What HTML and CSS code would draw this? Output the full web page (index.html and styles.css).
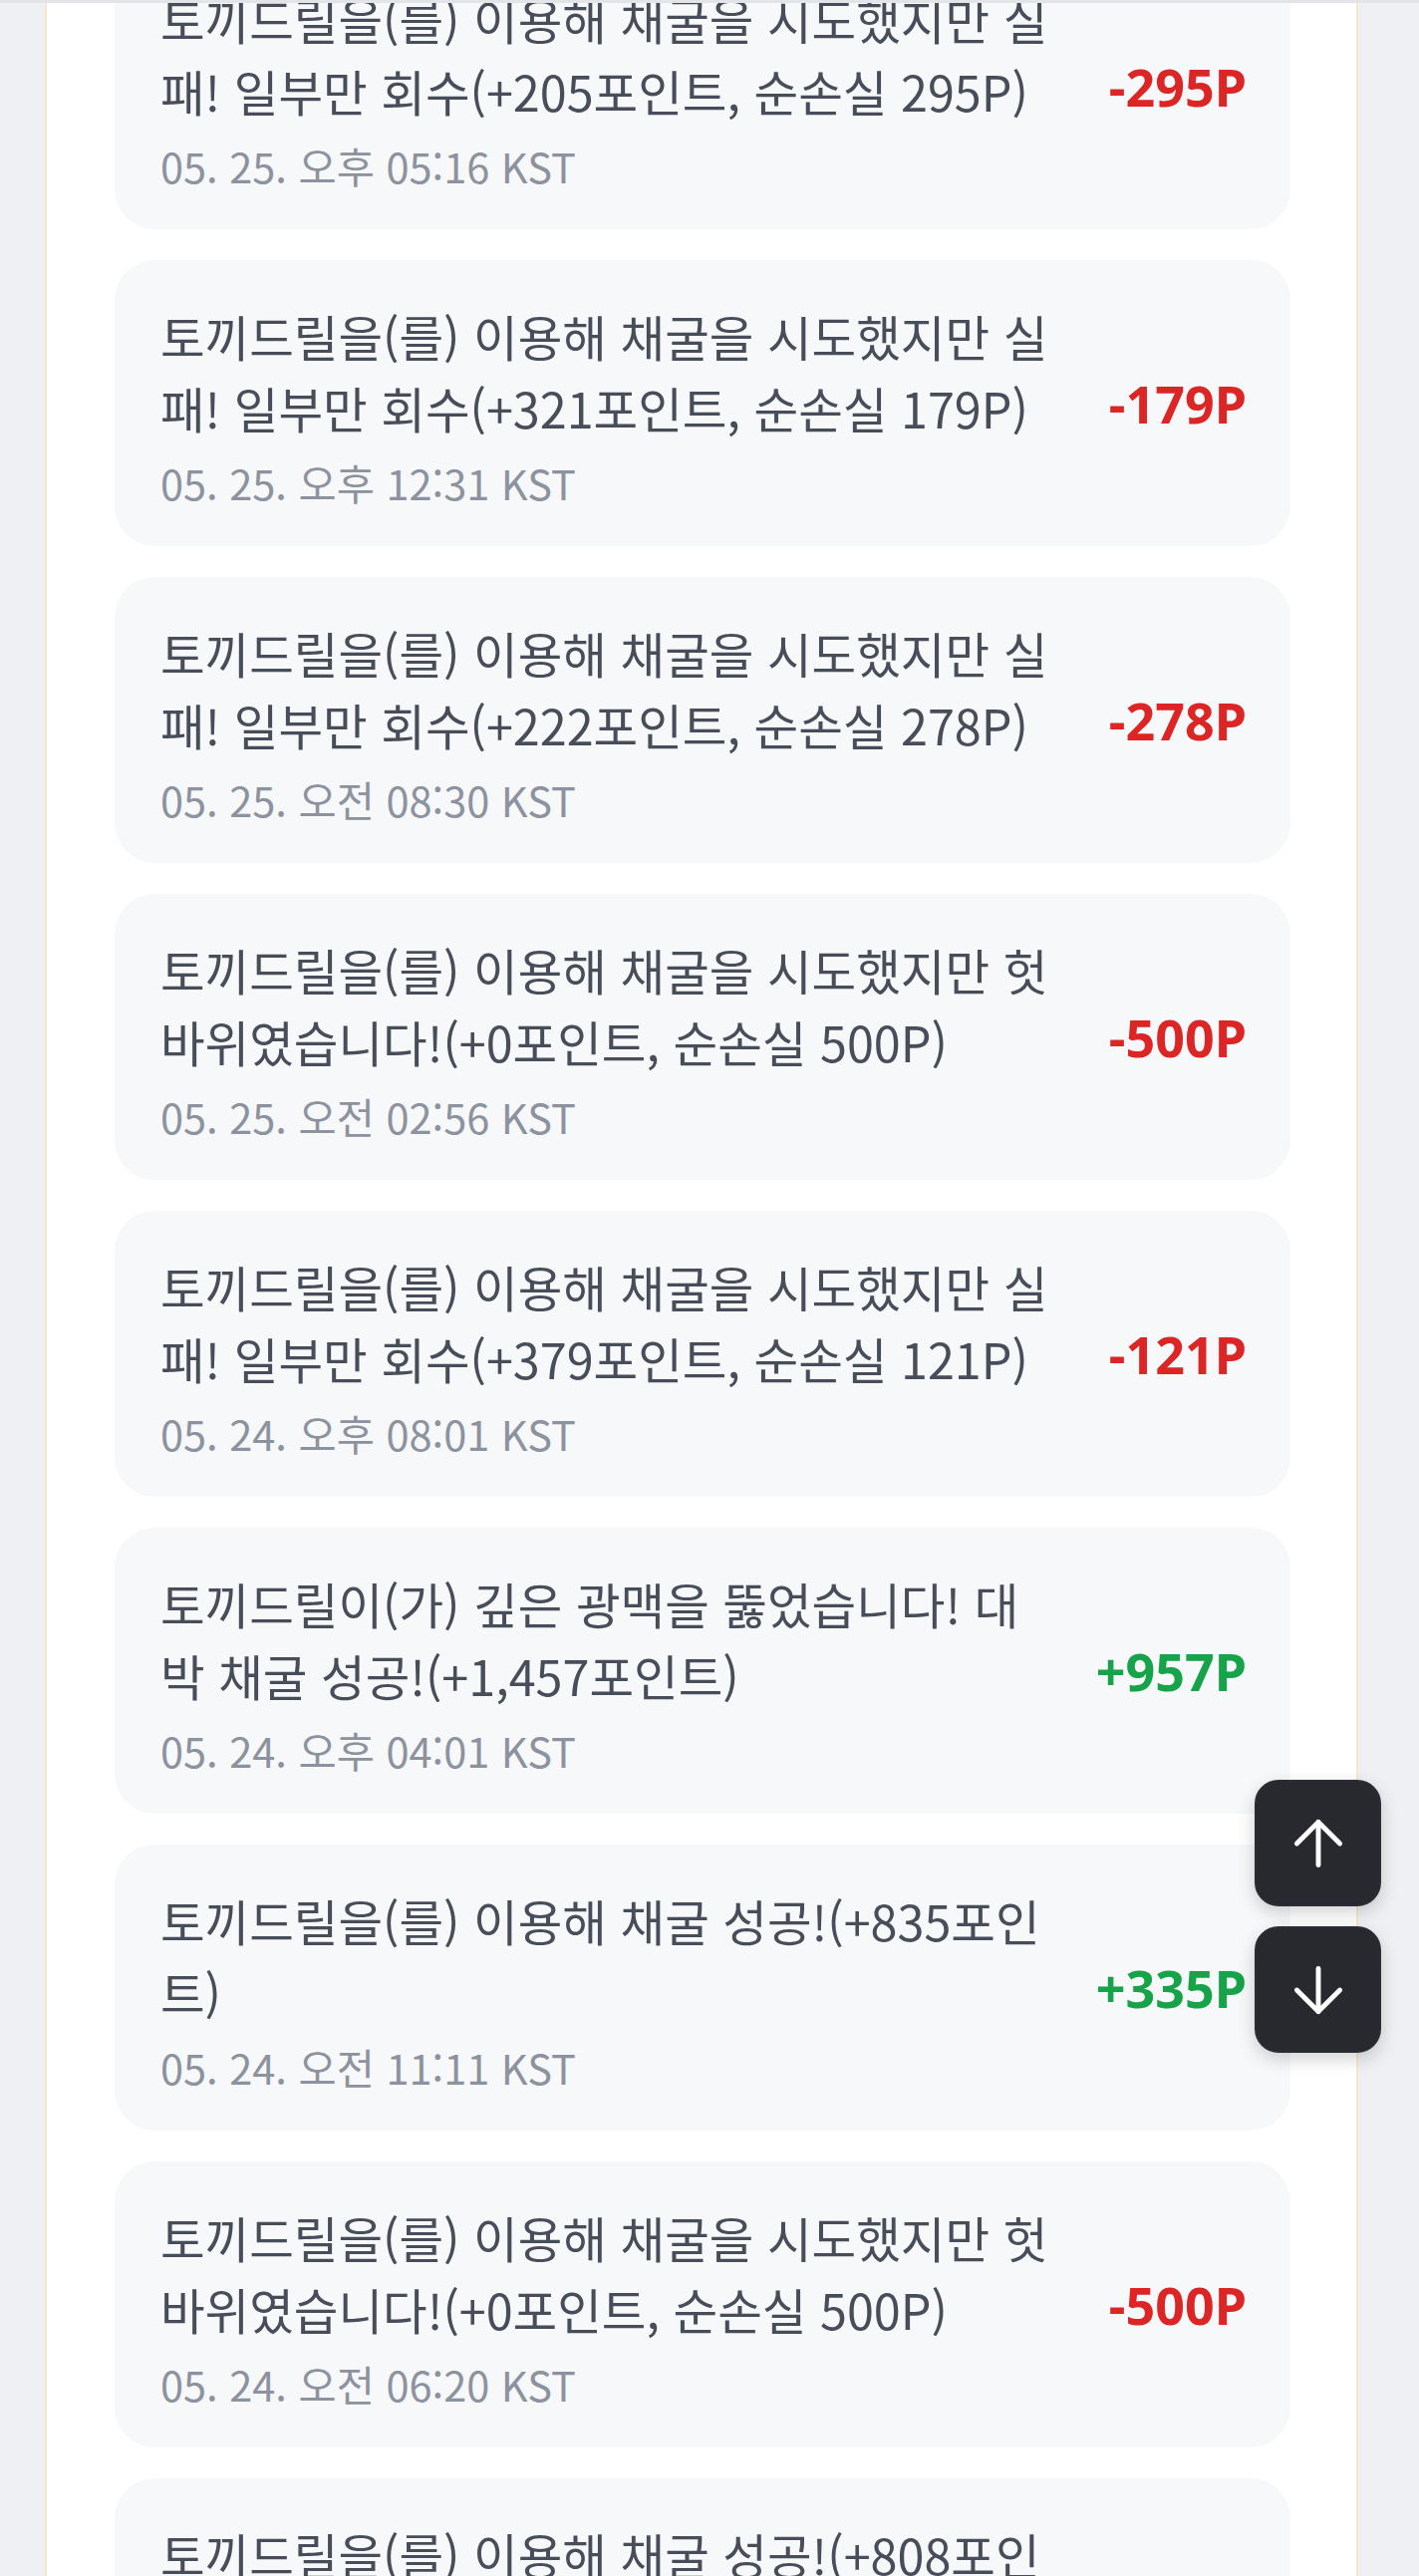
FILE: index.html
```html
<!DOCTYPE html>
<html lang="ko">
<head>
<meta charset="utf-8">
<title>채굴 기록</title>
<link rel="stylesheet" href="styles.css">
</head>
<body>
<div class="topline"></div>
<main class="page">
  <ul class="log">
    <li class="item"><div class="body"><p class="msg">토끼드릴을(를) 이용해 채굴을 시도했지만 실패! 일부만 회수(+205포인트, 순손실 295P)</p><p class="date">05. 25. 오후 05:16 KST</p></div><span class="amt minus">-295P</span></li>
    <li class="item"><div class="body"><p class="msg">토끼드릴을(를) 이용해 채굴을 시도했지만 실패! 일부만 회수(+321포인트, 순손실 179P)</p><p class="date">05. 25. 오후 12:31 KST</p></div><span class="amt minus">-179P</span></li>
    <li class="item"><div class="body"><p class="msg">토끼드릴을(를) 이용해 채굴을 시도했지만 실패! 일부만 회수(+222포인트, 순손실 278P)</p><p class="date">05. 25. 오전 08:30 KST</p></div><span class="amt minus">-278P</span></li>
    <li class="item"><div class="body"><p class="msg">토끼드릴을(를) 이용해 채굴을 시도했지만 헛바위였습니다!(+0포인트, 순손실 500P)</p><p class="date">05. 25. 오전 02:56 KST</p></div><span class="amt minus">-500P</span></li>
    <li class="item"><div class="body"><p class="msg">토끼드릴을(를) 이용해 채굴을 시도했지만 실패! 일부만 회수(+379포인트, 순손실 121P)</p><p class="date">05. 24. 오후 08:01 KST</p></div><span class="amt minus">-121P</span></li>
    <li class="item"><div class="body"><p class="msg">토끼드릴이(가) 깊은 광맥을 뚫었습니다! 대박 채굴 성공!(+1,457포인트)</p><p class="date">05. 24. 오후 04:01 KST</p></div><span class="amt plus">+957P</span></li>
    <li class="item"><div class="body"><p class="msg">토끼드릴을(를) 이용해 채굴 성공!(+835포인트)</p><p class="date">05. 24. 오전 11:11 KST</p></div><span class="amt plus">+335P</span></li>
    <li class="item"><div class="body"><p class="msg">토끼드릴을(를) 이용해 채굴을 시도했지만 헛바위였습니다!(+0포인트, 순손실 500P)</p><p class="date">05. 24. 오전 06:20 KST</p></div><span class="amt minus">-500P</span></li>
    <li class="item"><div class="body"><p class="msg">토끼드릴을(를) 이용해 채굴 성공!(+808포인트)</p><p class="date">05. 24. 오전 02:03 KST</p></div><span class="amt plus">+308P</span></li>
  </ul>
</main>
<div class="fab">
  <button class="fab-btn" type="button" aria-label="맨 위로">
    <svg viewBox="0 0 24 24" width="74" height="74" fill="none" stroke="#fff" stroke-width="1.6" stroke-linecap="round" stroke-linejoin="round"><path d="M12 19V5"/><path d="M5 12l7-7 7 7"/></svg>
  </button>
  <button class="fab-btn" type="button" aria-label="맨 아래로">
    <svg viewBox="0 0 24 24" width="74" height="74" fill="none" stroke="#fff" stroke-width="1.6" stroke-linecap="round" stroke-linejoin="round"><path d="M12 5v14"/><path d="M19 12l-7 7-7-7"/></svg>
  </button>
</div>
</body>
</html>
```
FILE: styles.css
```css
html, body {
  margin: 0;
  padding: 0;
}
body {
  background: #eef0f3;
  font-family: "Noto Sans CJK KR", "Noto Sans", sans-serif;
  color: #4a505b;
  height: 2585px;
  overflow: hidden;
}
.topline {
  position: fixed;
  top: 0;
  left: 0;
  right: 0;
  height: 3px;
  background: #e2e4e8;
  z-index: 5;
}
.page {
  margin-left: 45px;
  width: 1180px;
  min-height: 2585px;
  background: #ffffff;
  border-left: 2px solid #f6e8c8;
  border-right: 2px solid #f6e8c8;
  padding: 0 66px 0 68px;
  box-sizing: content-box;
}
.log {
  list-style: none;
  margin: -57px 0 0 0;
  padding: 0;
  display: flex;
  flex-direction: column;
  gap: 31px;
}
.item {
  display: flex;
  align-items: center;
  gap: 38px;
  background: #f7f8fa;
  border-radius: 40px;
  padding: 0 44px 0 46px;
  height: 287px;
  box-sizing: border-box;
}
.body {
  flex: 1;
  min-width: 0;
}
.msg {
  margin: 0;
  font-size: 48.5px;
  line-height: 72px;
  color: #484d5a;
}
.date {
  margin: 14px 0 0 0;
  font-size: 41.5px;
  line-height: 50px;
  color: #8d939e;
}
.amt {
  flex-shrink: 0;
  font-size: 52px;
  font-weight: 700;
  line-height: 1;
  font-family: "Noto Sans", "Noto Sans CJK KR", sans-serif;
}
.minus { color: #dc2626; }
.plus { color: #16a34a; }
.fab {
  position: fixed;
  right: 38px;
  top: 1786px;
  display: flex;
  flex-direction: column;
  gap: 20px;
  z-index: 10;
}
.fab-btn {
  width: 127px;
  height: 127px;
  border-radius: 24px;
  background: rgba(30, 32, 38, 0.96);
  border: 2px solid #2b2d34;
  box-shadow: 0 6px 18px rgba(0, 0, 0, 0.18);
  display: flex;
  align-items: center;
  justify-content: center;
  padding: 0;
  cursor: pointer;
}
```
